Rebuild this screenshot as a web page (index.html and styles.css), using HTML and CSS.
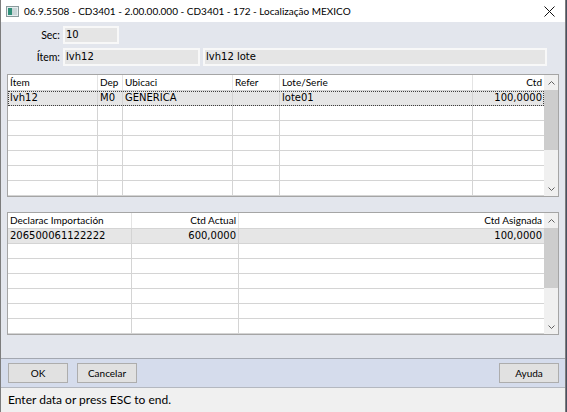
FILE: index.html
```html
<!DOCTYPE html>
<html>
<head>
    <meta charset="utf-8">
    <meta name="viewport" content="width=device-width, initial-scale=1.0">
    <title>Localização MEXICO</title>
    <link rel="stylesheet" href="styles.css">
</head>
<body>
    <div class="window">
        <div class="titlebar">
            <svg class="app-icon" width="13" height="11" viewBox="0 0 13 11">
                <rect x="0.5" y="0.5" width="12" height="10" fill="#e6eef0" stroke="#8a9a9c"/>
                <rect x="2" y="2" width="4" height="7" fill="#2f8f78"/>
                <rect x="6" y="2" width="5" height="7" fill="#c9d6d8"/>
            </svg>
            <span class="title">06.9.5508 - CD3401 - 2.00.00.000 - CD3401 - 172 - Localização MEXICO</span>
            <svg class="close" width="11" height="11" viewBox="0 0 11 11">
                <path d="M0.5 0.5 L10.5 10.5 M10.5 0.5 L0.5 10.5" stroke="#111" stroke-width="1"/>
            </svg>
        </div>

        <div class="content">
            <div class="field-row">
                <label class="field-label">Sec:</label>
                <div class="input input-sec">10</div>
            </div>
            <div class="field-row">
                <label class="field-label">Ítem:</label>
                <div class="input input-item">lvh12</div>
                <div class="input input-desc">lvh12 lote</div>
            </div>

            <!-- lots / locations -->
            <div class="grid grid-lots">
                <div class="grid-table">
                    <div class="row head">
                        <div class="cell col-item">Ítem</div>
                        <div class="cell col-dep">Dep</div>
                        <div class="cell col-ubic">Ubicaci</div>
                        <div class="cell col-refer">Refer</div>
                        <div class="cell col-lote">Lote/Serie</div>
                        <div class="cell col-ctd num">Ctd</div>
                    </div>
                    <div class="row data current">
                        <div class="cell col-item">lvh12</div>
                        <div class="cell col-dep">M0</div>
                        <div class="cell col-ubic">GENERICA</div>
                        <div class="cell col-refer"></div>
                        <div class="cell col-lote">lote01</div>
                        <div class="cell col-ctd num">100,0000</div>
                    </div>
                    <div class="row data"><div class="cell col-item"></div><div class="cell col-dep"></div><div class="cell col-ubic"></div><div class="cell col-refer"></div><div class="cell col-lote"></div><div class="cell col-ctd"></div></div>
                    <div class="row data"><div class="cell col-item"></div><div class="cell col-dep"></div><div class="cell col-ubic"></div><div class="cell col-refer"></div><div class="cell col-lote"></div><div class="cell col-ctd"></div></div>
                    <div class="row data"><div class="cell col-item"></div><div class="cell col-dep"></div><div class="cell col-ubic"></div><div class="cell col-refer"></div><div class="cell col-lote"></div><div class="cell col-ctd"></div></div>
                    <div class="row data"><div class="cell col-item"></div><div class="cell col-dep"></div><div class="cell col-ubic"></div><div class="cell col-refer"></div><div class="cell col-lote"></div><div class="cell col-ctd"></div></div>
                    <div class="row data"><div class="cell col-item"></div><div class="cell col-dep"></div><div class="cell col-ubic"></div><div class="cell col-refer"></div><div class="cell col-lote"></div><div class="cell col-ctd"></div></div>
                    <div class="row data"><div class="cell col-item"></div><div class="cell col-dep"></div><div class="cell col-ubic"></div><div class="cell col-refer"></div><div class="cell col-lote"></div><div class="cell col-ctd"></div></div>
                </div>
                <div class="scrollbar">
                    <div class="sb-btn"><svg width="7" height="4" viewBox="0 0 7 4"><path d="M0.5 3.5 L3.5 0.5 L6.5 3.5" fill="none" stroke="#606060"/></svg></div>
                    <div class="sb-thumb"></div>
                    <div class="sb-track"></div>
                    <div class="sb-btn"><svg width="7" height="4" viewBox="0 0 7 4"><path d="M0.5 0.5 L3.5 3.5 L6.5 0.5" fill="none" stroke="#606060"/></svg></div>
                </div>
            </div>

            <!-- import declarations -->
            <div class="grid grid-decl">
                <div class="grid-table">
                    <div class="row head">
                        <div class="cell col-decl">Declarac Importación</div>
                        <div class="cell col-actual num">Ctd Actual</div>
                        <div class="cell col-asig num">Ctd Asignada</div>
                    </div>
                    <div class="row data picked">
                        <div class="cell col-decl">206500061122222</div>
                        <div class="cell col-actual num">600,0000</div>
                        <div class="cell col-asig num">100,0000</div>
                    </div>
                    <div class="row data"><div class="cell col-decl"></div><div class="cell col-actual"></div><div class="cell col-asig"></div></div>
                    <div class="row data"><div class="cell col-decl"></div><div class="cell col-actual"></div><div class="cell col-asig"></div></div>
                    <div class="row data"><div class="cell col-decl"></div><div class="cell col-actual"></div><div class="cell col-asig"></div></div>
                    <div class="row data"><div class="cell col-decl"></div><div class="cell col-actual"></div><div class="cell col-asig"></div></div>
                    <div class="row data"><div class="cell col-decl"></div><div class="cell col-actual"></div><div class="cell col-asig"></div></div>
                    <div class="row data"><div class="cell col-decl"></div><div class="cell col-actual"></div><div class="cell col-asig"></div></div>
                </div>
                <div class="scrollbar">
                    <div class="sb-btn"><svg width="7" height="4" viewBox="0 0 7 4"><path d="M0.5 3.5 L3.5 0.5 L6.5 3.5" fill="none" stroke="#606060"/></svg></div>
                    <div class="sb-thumb"></div>
                    <div class="sb-track"></div>
                    <div class="sb-btn"><svg width="7" height="4" viewBox="0 0 7 4"><path d="M0.5 0.5 L3.5 3.5 L6.5 0.5" fill="none" stroke="#606060"/></svg></div>
                </div>
            </div>
        </div>

        <div class="buttonbar">
            <button class="btn">OK</button>
            <button class="btn">Cancelar</button>
            <button class="btn btn-help">Ayuda</button>
        </div>
        <div class="statusbar">Enter data or press ESC to end.</div>
    </div>
</body>
</html>
```

FILE: styles.css
```css
body {
    margin: 0;
    padding: 0;
    background-color: #4a5060;
    font-family: Lato, "Liberation Sans", sans-serif;
}

.window {
    width: 566px;
    height: 412px;
    box-sizing: border-box;
    border-left: 1px solid #7d7d7d;
    border-right: 1px solid #7d7d7d;
    background-color: #e3e6ed;
    display: flex;
    flex-direction: column;
}

/* title bar */
.titlebar {
    height: 22px;
    background-color: #fff;
    display: flex;
    align-items: center;
    flex-shrink: 0;
}

.app-icon {
    margin-left: 5px;
}

.title {
    margin-left: 5px;
    font-size: 10px;
    color: #000;
    flex: 1;
}

.close {
    margin-right: 10px;
}

/* form area */
.content {
    flex: 1;
    padding: 4px 5px 0 6px;
}

.field-row {
    display: flex;
    height: 18px;
    margin-bottom: 4px;
}

.field-label {
    width: 53px;
    margin-right: 3px;
    text-align: right;
    font-size: 10.5px;
    line-height: 18px;
    color: #000;
}

.input {
    box-sizing: border-box;
    height: 18px;
    border: 2px solid #f8f8f8;
    background-color: #e5e5e5;
    padding-left: 1px;
    font-family: "DejaVu Sans", sans-serif;
    font-size: 10px;
    line-height: 14px;
    color: #000;
}

.input-sec {
    width: 56px;
}

.input-item {
    width: 137px;
    margin-right: 3px;
}

.input-desc {
    width: 344px;
}

/* grids */
.grid {
    display: flex;
    width: 552px;
    height: 123px;
    box-sizing: border-box;
    border: 1px solid #a5a5a5;
    background-color: #fff;
}

.grid-lots {
    margin-top: 8px;
}

.grid-decl {
    margin-top: 15px;
}

.grid-table {
    width: 536px;
}

.row {
    display: flex;
    height: 15px;
    box-sizing: border-box;
    border-bottom: 1px solid #d4d4d4;
}

.row.head {
    height: 16px;
}

.cell {
    box-sizing: border-box;
    height: 100%;
    border-right: 1px solid #d4d4d4;
    padding: 0 2px;
    overflow: hidden;
    white-space: nowrap;
    color: #000;
}

.cell:last-child {
    border-right: none;
}

.head .cell {
    font-size: 10px;
    line-height: 15px;
    border-right-color: #e4e4e4;
}

.data .cell {
    font-family: "DejaVu Sans", sans-serif;
    font-size: 10px;
    line-height: 14px;
}

.num {
    text-align: right;
}

.row.current {
    background-color: #e6e6e6;
    outline: 1px dotted #404040;
    outline-offset: -1px;
}

.row.picked {
    background-color: #e6e6e6;
}

.col-item { width: 90px; }
.col-dep { width: 25px; }
.col-ubic { width: 110px; }
.col-refer { width: 47px; }
.col-lote { width: 193px; }
.col-ctd { width: 71px; }

.col-decl { width: 124px; }
.col-actual { width: 107px; }
.col-asig { width: 305px; }

.scrollbar {
    width: 14px;
    background-color: #f0f0f0;
    display: flex;
    flex-direction: column;
}

.sb-btn {
    height: 15px;
    display: flex;
    align-items: center;
    justify-content: center;
}

.sb-thumb {
    height: 60px;
    background-color: #cdcdcd;
}

.sb-track {
    flex: 1;
}

/* bottom buttons */
.buttonbar {
    height: 30px;
    box-sizing: border-box;
    border-top: 1px solid #a3a7b0;
    border-bottom: 1px solid #b4b8c0;
    background-color: #d5dcec;
    display: flex;
    align-items: center;
    padding: 0 6px 0 7px;
    flex-shrink: 0;
}

.btn {
    width: 60px;
    height: 20px;
    margin-right: 9px;
    background-color: #e1e1e1;
    border: 1px solid #adadad;
    font-family: Lato, "Liberation Sans", sans-serif;
    font-size: 10px;
    color: #000;
    padding: 0;
}

.btn-help {
    margin-left: auto;
    margin-right: 0;
}

.statusbar {
    height: 24px;
    background-color: #f0f0f0;
    padding-left: 7px;
    font-size: 12px;
    line-height: 24px;
    color: #000;
    flex-shrink: 0;
}
```
